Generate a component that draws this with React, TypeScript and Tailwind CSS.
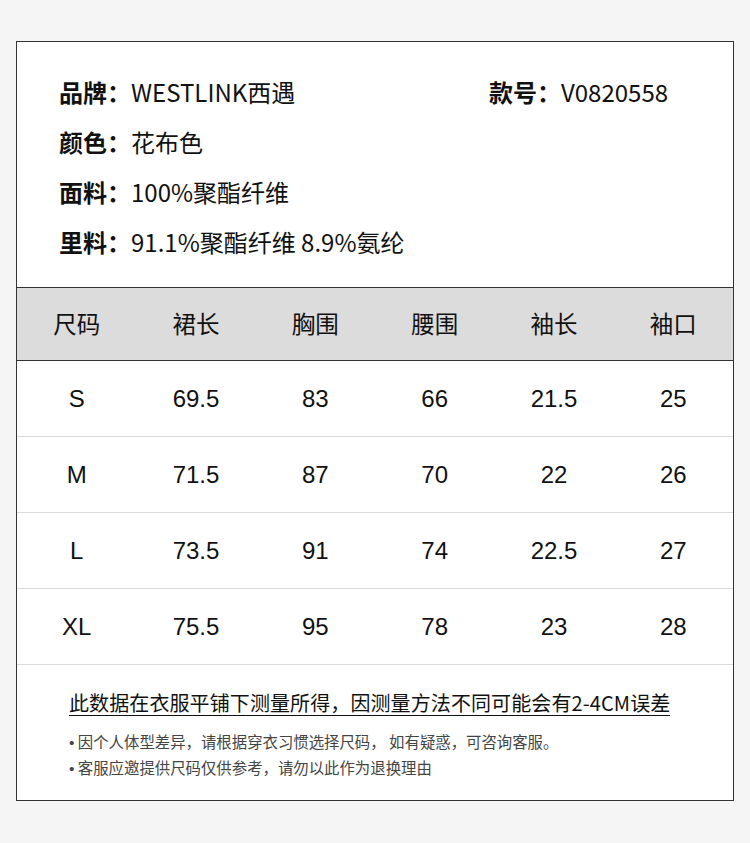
const cjk = "font-['Noto_Sans_CJK_SC',sans-serif]";

const info = [
  { label: '颜色：', value: '花布色' },
  { label: '面料：', value: '100%聚酯纤维' },
  { label: '里料：', value: '91.1%聚酯纤维 8.9%氨纶' },
];

const headers = ['尺码', '裙长', '胸围', '腰围', '袖长', '袖口'];

const rows = [
  ['S', '69.5', '83', '66', '21.5', '25'],
  ['M', '71.5', '87', '70', '22', '26'],
  ['L', '73.5', '91', '74', '22.5', '27'],
  ['XL', '75.5', '95', '78', '23', '28'],
];

export default function App() {
  return (
    <div className={`min-h-[843px] w-[750px] bg-[#f5f5f5] pt-[41px] ${cjk}`}>
      <div className="mx-[16px] h-[760px] border border-[#333] bg-white">
        {/* product info */}
        <div className="px-[42px] pt-[25px] pb-[20px] text-[24px] leading-[50px] text-[#111]">
          <div className="flex">
            <div className="w-[430px]">
              <span className="font-bold">品牌：</span>
              <span>WESTLINK西遇</span>
            </div>
            <div>
              <span className="font-bold">款号：</span>
              <span>V0820558</span>
            </div>
          </div>
          {info.map((r) => (
            <div key={r.label}>
              <span className="font-bold">{r.label}</span>
              <span>{r.value}</span>
            </div>
          ))}
        </div>

        {/* size table */}
        <div className="grid h-[74px] grid-cols-6 items-center border-y border-[#333] bg-[#dcdcdc] text-[23.5px] text-[#111]">
          {headers.map((h) => (
            <div key={h} className="text-center">{h}</div>
          ))}
        </div>
        {rows.map((r) => (
          <div
            key={r[0]}
            className="grid h-[76px] grid-cols-6 items-center border-b border-[#dcdcdc] font-['Liberation_Sans',sans-serif] text-[24px] text-[#111]"
          >
            {r.map((c, i) => (
              <div key={i} className="text-center">{c}</div>
            ))}
          </div>
        ))}

        {/* notes */}
        <div className="px-[52px] pt-[25px]">
          <div className="inline-block border-b-[1.5px] border-[#111] text-[20px] leading-[25px] tracking-[0.1px] text-[#111]">
            此数据在衣服平铺下测量所得，因测量方法不同可能会有2-4CM误差
          </div>
          <div className="mt-[13px] text-[15.4px] leading-[24px] text-[#444]">
            <div>
              <span className="font-['Liberation_Sans',sans-serif]">•</span> 因个人体型差异，请根据穿衣习惯选择尺码， 如有疑惑，可咨询客服。
            </div>
            <div>
              <span className="font-['Liberation_Sans',sans-serif]">•</span> 客服应邀提供尺码仅供参考，请勿以此作为退换理由
            </div>
          </div>
        </div>
      </div>
    </div>
  );
}
